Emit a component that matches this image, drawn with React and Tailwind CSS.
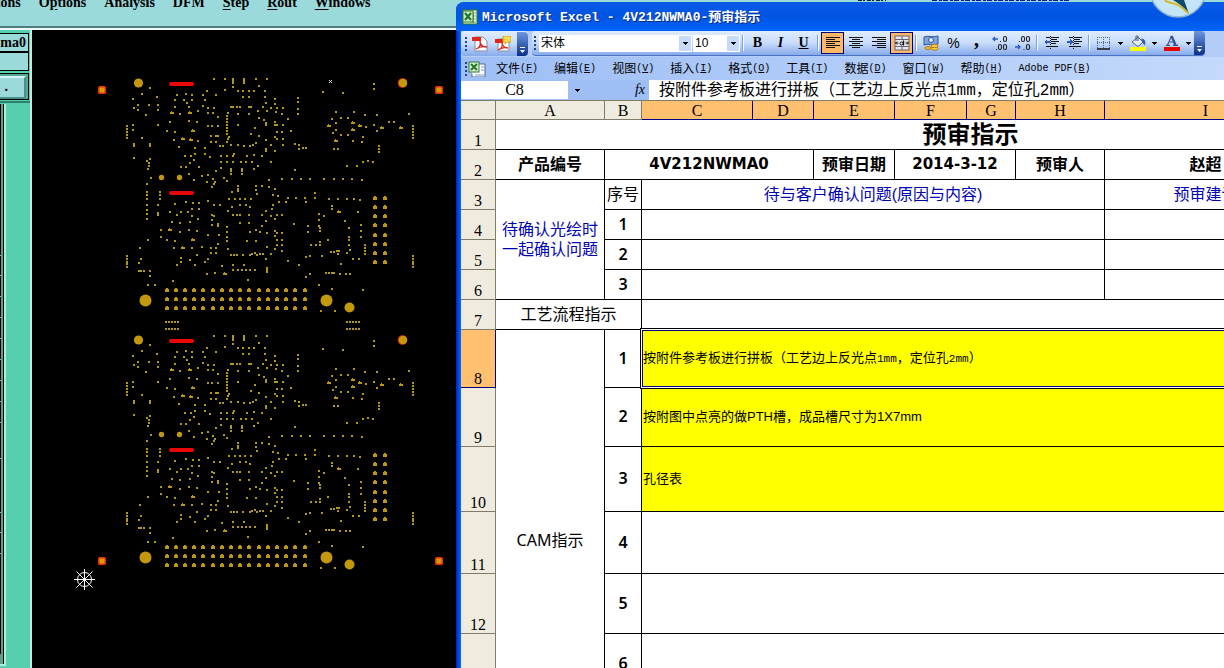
import React from 'react';

const CJK = 'font-["Liberation_Sans","Noto_Sans_CJK_SC",sans-serif]';

/* ---------- board data, px from the board origin ---------- */

const PADS = `94,9 105,9 113,9 113,11 113,13 113,17 124,9 124,11 124,13 136,9 147,9 139,16 30,18 22,24 37,27 13,29
57,25 66,24 72,25 55,30 64,30 72,30 67,33 55,37 69,37 83,25 87,21 96,25 85,30 105,20 118,21 123,21 129,21 134,21
123,27 129,27 145,21 145,27 18,35 29,35 38,35 14,38 18,40 38,40 83,36 88,38 94,38 111,37 113,37 117,37 120,37
129,37 131,37 143,37 146,33 138,41 147,41 26,45 60,44 78,41 88,43 93,43 108,43 118,44 129,44 98,47 107,46 107,49
107,52 107,55 107,58 107,61 107,64 109,67 108,69 107,72 50,52 69,51 77,52 38,55 13,55 13,60 139,48 144,50 146,53
146,55 7,56 7,59 7,62 7,65 7,68 88,56 92,56 98,56 118,55 47,61 55,62 91,66 96,66 98,66 91,72 96,72 22,68 54,70
78,71 135,58 131,64 139,66 146,70 14,74 14,76 30,74 30,76 100,76 103,76 111,75 118,75 124,76 130,76 133,75 136,73
146,79 146,81 59,77 75,78 85,78 14,88 30,89 27,91 29,93 29,96 28,99 31,108 65,86 71,86 75,84 74,90 70,93 61,97
66,97 79,97 85,84 90,87 101,86 107,86 113,86 114,84 127,86 134,85 142,86 101,92 107,92 113,92 121,92 126,92
132,92 101,98 96,101 111,99 111,101 111,104 122,99 122,101 122,104 138,96 134,99 69,104 74,110 82,106 88,105
87,112 93,109 95,112 94,114 92,117 104,108 107,111 149,110 27,114 118,116 118,119 118,121 136,116 136,120
142,116 112,122 149,117 155,29 155,34 151,38 157,38 163,38 156,42 162,44 178,28 178,32 178,39 178,44 168,49
155,52 155,55 157,55 163,55 157,62 162,62 171,61 155,67 157,69 163,69 151,75 163,75 155,81 175,74 179,75 179,79
183,78 186,78 151,92 175,100 254,14 254,19 203,22 223,23 216,42 234,42 245,45 257,45 212,49 221,48 228,48 216,53
246,57 254,55 216,60 213,63 221,65 228,65 257,61 269,52 274,52 289,44 293,56 293,59 293,62 293,65 293,68 243,67
242,72 233,71 214,79 218,79 259,76 259,79 259,82 227,96 237,96 243,92 248,91 253,92 162,109 172,109 181,109
190,109 204,109 214,109 223,109 232,109 242,110 155,119 153,125 158,126 168,128 176,128 185,128 195,123 195,128
209,129 218,129 227,129 234,129 240,130 27,122 27,125 27,129 27,135 27,140 27,144 27,149 40,122 40,125 40,129
38,135 38,143 38,145 41,160 41,167 47,170 55,171 28,170 20,178 55,134 66,132 73,133 79,133 72,139 79,139 50,142
61,142 68,142 57,145 72,146 78,149 52,152 60,153 70,152 60,162 69,160 77,161 88,131 94,135 100,135 92,145 94,146
92,150 92,155 98,154 98,156 88,165 99,165 98,174 107,157 107,162 107,167 107,171 108,179 108,141 118,121 137,124
109,129 115,129 120,129 125,129 131,129 112,137 120,135 126,135 130,137 113,145 117,145 120,145 129,145 142,145
146,141 120,153 129,153 136,160 140,162 130,162 142,156 146,151 147,163 127,171 136,171 147,177 54,178 72,178
82,177 91,178 96,178 91,183 96,183 77,185 61,188 61,192 70,190 88,189 85,192 57,195 75,195 111,185 114,185
117,185 123,185 130,185 132,184 135,183 137,185 140,184 143,184 146,189 102,196 113,195 124,195 113,200 118,200
122,200 126,200 130,200 135,200 147,198 147,200 147,202 7,186 7,189 7,192 7,194 7,197 21,189 19,193 19,201
21,201 24,201 30,201 30,206 28,215 35,215 87,204 95,203 128,210 53,211 159,132 166,132 186,132 153,135 152,139
151,146 157,145 162,145 155,149 212,136 212,139 238,142 199,144 204,146 199,150 225,151 174,154 188,156 188,162
199,156 200,158 200,161 229,158 241,155 241,161 241,167 155,161 157,163 162,163 155,166 157,170 162,170 157,175
162,175 155,179 162,181 151,184 200,172 191,175 196,175 200,175 208,170 229,167 229,170 229,175 230,180 227,183
245,175 245,178 245,181 245,184 211,182 214,182 217,181 219,181 218,184 202,186 190,186 186,187 168,191 179,195
233,189 239,189 221,194 293,186 293,189 293,192 293,194 293,197 206,203 209,203 212,203 214,203 220,204 226,204
230,204 190,204 186,207 199,215 212,219 243,220 201,241 215,241`;

const VIAS = `52,43 70,43 73,61 63,69 71,70 233,53 209,56 240,56 233,60 262,58 281,58 216,71 50,160 73,170 63,178
105,204 219,142`;

const parse = s => s.trim().split(/\s+/).map(p => p.split(',').map(Number));
const cross = (xs, ys) => ys.flatMap(y => xs.map(x => [x, y]));

const pinRows = cross([47, 56, 65, 74, 83, 93, 102, 111, 120, 129, 139, 148, 157, 166, 175, 185], [220, 229, 238]);
const pinCols = cross([255, 265], [128, 137, 146, 155, 165, 174, 183, 192]);
const tabHoles = cross([46, 49, 52, 55, 58, 227, 230, 233, 236, 239], [252, 259]);

const square = pts => pts.map(([x, y]) => `M${x - 1} ${y - 1}h2v2h-2z`).join('');
const via = pts => pts.map(([x, y]) => `M${x - 1} ${y - 1}v-1h1v1h2v2h-4v-2z`).join('');
const pin = pts => pts.map(([x, y]) => `M${x - 2} ${y - 1}h1v-1h2v1h1v3h-4z`).join('');

const padPath = square(parse(PADS));
const viaPath = via(parse(VIAS));
const pinPath = pin([...pinRows, ...pinCols]);

function Board({ y }) {
  return (
    <g transform={`translate(88 ${y})`}>
      <g shapeRendering="crispEdges">
        <path d={padPath} fill="#b0981c" />
        <path d={viaPath} fill="#bd980f" />
        <path d={pinPath} fill="#bd980f" />
      </g>
      <g fill="#c4980c">
        <circle cx="282.5" cy="13" r="4.8" fill="#e02808" />
        <circle cx="18.5" cy="13" r="4.6" />
        <circle cx="283" cy="13" r="4.2" />
        <circle cx="25.5" cy="230.5" r="6" />
        <circle cx="206.5" cy="230.5" r="6" />
        <circle cx="229.5" cy="237.5" r="5" />
        <circle cx="41.5" cy="107.5" r="2.7" />
        <circle cx="59.5" cy="107.5" r="2.7" />
      </g>
      <g fill="#e80808">
        <rect x="49" y="12" width="25" height="4" rx="2" />
        <rect x="49" y="121" width="25" height="4" rx="2" />
      </g>
    </g>
  );
}

function BoardCanvas() {
  const marks = [[70, 60], [407, 60], [70, 531], [407, 531]];
  return (
    <svg width="424" height="638" viewBox="0 0 424 638" className="block" role="img" aria-label="PCB panel">
      <Board y={40} />
      <Board y={297} />
      <path d={square(tabHoles)} transform="translate(88 40)" fill="#b0981c" shapeRendering="crispEdges" />
      {marks.map(([x, y]) => (
        <g key={`${x}-${y}`}>
          <rect x={x - 4} y={y - 4} width="8" height="8" rx="1.5" fill="#e63005" />
          <rect x={x - 2.5} y={y - 2.5} width="5" height="5" rx="1" fill="#d89a08" />
        </g>
      ))}
      <path d="M297 50l3 3m0-3l-3 3" stroke="#ddd" strokeWidth="1" />
      {/* datum */}
      <g stroke="#fff" strokeWidth="1" fill="none">
        <path d="M42 549.5h21M52.5 539v21M44.5 541.5l16 16M60.5 541.5l-16 16" />
        <circle cx="52.5" cy="549.5" r="7" />
      </g>
    </svg>
  );
}

/* ---------- CAM tool ---------- */

const CAM_MENUS = [
  ['', '', 'tions'], ['O', 'p', 'tions'], ['', '', 'Analysis'], ['', '', 'DFM'],
  ['', 'S', 'tep'], ['', 'R', 'out'], ['', 'W', 'indows'],
];

const LIST_ROWS = [152, 20, 21, 21, 21, 21, 21, 21, 21, 36, 54, 20, 21];

function CamApp() {
  return (
    <section className="w-[456px] shrink-0 flex flex-col bg-[#9adadb]">
      <div className="h-[30px] shrink-0 overflow-hidden border-b-2 border-[#eefafa]">
        <nav className='h-7 border-b-2 border-[#4f7c7e] flex gap-[18px] text-sm font-bold text-black font-["Liberation_Serif",serif]'>
          {CAM_MENUS.map(([a, u, b]) => (
            <button key={a + u + b} className={`-mt-[7px] h-5 leading-5 ${a + u + b === 'tions' ? '-ml-[8px]' : ''}`}>
              {a}<span className="underline underline-offset-2">{u}</span>{b}
            </button>
          ))}
        </nav>
      </div>
      <div className="flex flex-1 min-h-0">
        <aside className="w-8 shrink-0 flex flex-col bg-[#55cfb0] border-r-2 border-[#b8efe0]">
          <div className="mt-[3px] mr-[1px] h-[19px] border border-l-0 border-black bg-[#9adadb] flex items-center justify-end pr-[2px] text-sm leading-4 font-bold font-['Liberation_Serif',serif]">ma0</div>
          <div className="mr-[1px] h-[19px] border border-l-0 border-black bg-[#9adadb]" />
          <div className="mt-[2px] mr-[1px] h-[27px] border border-l-0 border-black bg-[#55a898] pr-[2px] pb-[2px]">
            <button className="w-full h-full border-t-2 border-r-2 border-b-2 border-t-[#d8f5f5] border-r-[#4f8f8a] border-b-[#4f8f8a] bg-[#9adadb] text-sm leading-4 font-bold font-['Liberation_Serif',serif] text-right pr-4">.</button>
          </div>
          <div className="mt-[1px] h-[2px] bg-[#2f7d6c]" />
          <div className="flex-1 w-[6px] mt-[1px] mb-[2px] border-r-2 border-b-2 border-[#b0ecd9]">
            <div className="h-full border-r border-black bg-[#5f9f8a] pr-[2px]">
              {LIST_ROWS.map((h, i) => (
                <div key={i} className="w-[1px] bg-black border-b border-[#55cfb0]" style={{ height: h }} />
              ))}
              <div className="w-[1px] h-[100px] bg-black" />
            </div>
          </div>
        </aside>
        <main className="flex-1 bg-black overflow-hidden"><BoardCanvas /></main>
      </div>
    </section>
  );
}

/* ---------- Excel toolbar icons ---------- */

const Svg = ({ w = 16, children, ...p }) => (
  <svg width={w} height="16" viewBox={`0 0 ${w} 16`} fill="none" {...p}>{children}</svg>
);

const Ico = {
  Excel: () => (
    <Svg>
      <rect x="1" y="1" width="14" height="14" fill="#e8f2e4" stroke="#2c7a2c" />
      <path d="M9 4h5M9 7h5M9 10h5M9 13h5M11.5 3v11" stroke="#7fae7a" />
      <rect x="1" y="2" width="10" height="11" fill="#d5ead0" stroke="#2c7a2c" />
      <path d="M3 4l6 7M9 4l-6 7" stroke="#1d7a25" strokeWidth="2.2" />
    </Svg>
  ),
  ExcelDoc: () => (
    <Svg w={18}>
      <path d="M7 3h10v13H4v-3" fill="#fff" stroke="#4a6a9a" />
      <path d="M13 6h3M13 9h3M7 14h9" stroke="#7a94c0" />
      <rect x="1" y="1" width="10" height="10" fill="#dcefd6" stroke="#2c7a2c" />
      <path d="M3 3l6 6M9 3L3 9" stroke="#1d7a25" strokeWidth="2" />
    </Svg>
  ),
  Pdf: () => (
    <Svg>
      <path d="M3 1h8l4 4v10H3z" fill="#fff" stroke="#8a8a9a" />
      <rect x="0" y="1" width="9" height="4" fill="#e3241b" />
      <path d="M4 13c3-1 5-4 4-8 0 4 3 6 7 6-4-1-8 0-11 2z" stroke="#dc2018" strokeWidth="1.3" />
    </Svg>
  ),
  PdfMail: () => (
    <Svg>
      <path d="M3 3h8l3 3v9H3z" fill="#fff" stroke="#8a8a9a" />
      <rect x="0" y="3" width="8" height="4" fill="#e3241b" />
      <path d="M3 14c3-1 5-4 4-8 0 4 3 6 6 6-4-1-7 0-10 2z" stroke="#dc2018" strokeWidth="1.3" />
      <path d="M8 0h8v6h-4l-2 2v-2H8z" fill="#ffd84a" stroke="#c79a12" strokeWidth=".8" />
    </Svg>
  ),
  Left: () => <Svg shapeRendering="crispEdges"><path d="M1 2.5h14M1 4.5h9M1 6.5h14M1 8.5h9M1 10.5h14M1 12.5h9" stroke="#111" /></Svg>,
  Center: () => <Svg shapeRendering="crispEdges"><path d="M1 2.5h14M4 4.5h8M1 6.5h14M4 8.5h8M1 10.5h14M4 12.5h8" stroke="#111" /></Svg>,
  Right: () => <Svg shapeRendering="crispEdges"><path d="M1 2.5h14M6 4.5h9M1 6.5h14M6 8.5h9M1 10.5h14M6 12.5h9" stroke="#111" /></Svg>,
  Merge: () => (
    <Svg>
      <rect x="1" y="1" width="14" height="14" fill="#e6e6ee" stroke="#667" />
      <path d="M1 4.5h14M1 11.5h14M8 1v3M8 12v3" stroke="#667" />
      <path d="M1.500 8h3M14.500 8h-3M3 6.5L1.500 8 3 9.5M13 6.5L14.500 8 13 9.5" stroke="#111" />
      <circle cx="7.500" cy="8.5" r="1.5" stroke="#111" /><path d="M9.5 5.500v5" stroke="#111" strokeWidth="1.3" />
    </Svg>
  ),
  Currency: () => (
    <Svg>
      <path d="M1 2c4-2 9 1 14-1v8c-5 2-10-1-14 1z" fill="#7fa3dd" stroke="#2f55a0" />
      <circle cx="8" cy="5" r="2.5" fill="#dce8fb" stroke="#2f55a0" />
      <ellipse cx="11.5" cy="13.5" rx="3.5" ry="1.7" fill="#ffd24a" stroke="#b07d10" />
      <ellipse cx="11.5" cy="11" rx="3.5" ry="1.7" fill="#ffd24a" stroke="#b07d10" />
      <ellipse cx="5" cy="13" rx="3" ry="1.5" fill="#f2b93a" stroke="#b07d10" />
    </Svg>
  ),
  Outdent: () => (
    <Svg shapeRendering="crispEdges">
      <path d="M2 2.5h4M7 2.5h8M7 4.5h6M7 6.5h8M7 8.5h5M2 11.5h4M7 11.5h7" stroke="#111" strokeWidth="1.5" />
      <path d="M6.500 1v13" stroke="#111" strokeDasharray="1 1" />
      <path d="M0 7l3-3v2h3v2H3v2z" fill="#2a5bc4" />
    </Svg>
  ),
  Indent: () => (
    <Svg shapeRendering="crispEdges">
      <path d="M2 2.5h4M7 2.5h8M7 4.5h6M7 6.5h8M7 8.5h5M2 11.5h4M7 11.5h7" stroke="#111" strokeWidth="1.5" />
      <path d="M6.500 1v13" stroke="#111" strokeDasharray="1 1" />
      <path d="M6 7L3 4v2H0v2h3v2z" fill="#2a5bc4" />
    </Svg>
  ),
  Borders: () => <Svg><path d="M1.5 2v11M7.5 2v11M13.5 2v11M1 2.5h13M1 7.5h13" stroke="#55658c" strokeDasharray="1 1" /><path d="M1 14h13" stroke="#111" strokeWidth="1.3" /></Svg>,
  Fill: () => (
    <Svg>
      <path d="M2 7l6-5 5 5-5 4.500z" fill="#e4ecfa" stroke="#5a6480" /><path d="M6 6V1.500c0-1 2-1 2 0V6" stroke="#3b4f7d" />
      <path d="M11 3.500c4 0 5 3 4 7l-2-2z" fill="#2f5fb8" />
      <rect y="12" width="16" height="4" fill="#ff0" />
    </Svg>
  ),
  FontColor: () => (
    <Svg>
      <path d="M3.5 10L7.500 1" stroke="#41599b" strokeWidth="1.200" /><path d="M7.500 1l4 9" stroke="#31519b" strokeWidth="2.400" />
      <path d="M5.5 7h5M2 10.3h4M9 10.3h5" stroke="#31519b" strokeWidth="1.200" />
      <rect y="12" width="16" height="4" fill="#e00" />
    </Svg>
  ),
  Caret: () => <svg width="5" height="3" viewBox="0 0 5 3" shapeRendering="crispEdges"><path d="M0 0h5v1H4v1H3v1H2V2H1V1H0z" fill="#000" /></svg>,
};

function Decimal({ more }) {
  return (
    <Svg>
      <path d={more ? 'M6 4H1M3 2L1 4l2 2' : 'M0 12h5M3 10l2 2-2 2'} stroke="#2a5bc4" strokeWidth="1.3" />
      <g stroke="#222" strokeWidth="1.1">
        <rect x={more ? 11.5 : 6.5} y="1.5" width="3" height="5" rx="1.5" />
        {!more && <rect x="11.5" y="1.5" width="3" height="5" rx="1.5" />}
        {more && <rect x="6.5" y="9.5" width="3" height="5" rx="1.5" />}
        <rect x="11.5" y="9.5" width="3" height="5" rx="1.5" />
        <path d={more ? 'M8 6.5h1M4 14.5h1' : 'M4 6.5h1M8.5 14.5h1'} />
      </g>
    </Svg>
  );
}

const Grip = () => (
  <svg width="3" height="16" viewBox="0 0 3 16" className="shrink-0" shapeRendering="crispEdges">
    <path d="M0 1h2v2H0zM0 5h2v2H0zM0 9h2v2H0zM0 13h2v2H0z" fill="#27418f" />
  </svg>
);

const Sep = () => <span className="w-[2px] h-4 shrink-0 bg-[#7a9fe0] border-r border-white mx-[2px]" />;

function Tool({ label, active, children }) {
  return (
    <button
      aria-label={label}
      className={`w-[23px] h-[22px] shrink-0 flex items-center justify-center ${active ? 'border border-[#000080] bg-[#ffb868]' : ''}`}>
      {children}
    </button>
  );
}

function DropTool({ label, children }) {
  return (
    <button aria-label={label} className="w-[34px] h-[22px] shrink-0 flex items-center gap-[6px] pl-1">
      {children}<Ico.Caret />
    </button>
  );
}

function More() {
  return (
    <button aria-label="Toolbar options" className="w-[11px] h-6 shrink-0 rounded-r bg-linear-to-b from-[#6f97e0] to-[#0c2f8c] flex flex-col items-center justify-end gap-[2px] pb-[3px]">
      <span className="w-[5px] h-[1px] bg-white" />
      <svg width="5" height="3" viewBox="0 0 5 3"><path d="M0 0h5L2.5 3z" fill="#fff" /></svg>
    </button>
  );
}

function Combo({ label, value, width }) {
  return (
    <label className={`${width} h-[17px] shrink-0 flex items-center bg-white`}>
      <select aria-label={label} className="appearance-none flex-1 min-w-0 h-full pl-[2px] text-xs leading-4 bg-white">
        <option>{value}</option>
      </select>
      <span className="w-3 h-[15px] mr-[1px] bg-[#c6dafa] flex items-center justify-center"><Ico.Caret /></span>
    </label>
  );
}

function Toolbar() {
  const bar = 'h-[25px] flex items-center rounded bg-linear-to-b from-[#e0ecfe] via-[#c8dcfb] to-[#86aaea]';
  return (
    <div className="h-[26px] shrink-0 flex gap-1 bg-[#b4cdf8]">
      <div className={`${bar} pl-1`}>
        <Grip />
        <Tool label="Convert to PDF"><Ico.Pdf /></Tool>
        <Tool label="Convert and email"><Ico.PdfMail /></Tool>
        <span className="w-[3px]" />
        <More />
      </div>
      <div className={`${bar} pl-[2px] border-b border-[#4a72c4]`}>
        <Grip />
        <span className="w-[2px]" />
        <Combo label="Font" value="宋体" width="w-[153px]" />
        <span className="w-[1px]" />
        <Combo label="Font size" value="10" width="w-[47px]" />
        <Sep />
        <Tool label="Bold"><span className='font-bold text-sm font-["Liberation_Serif",serif]'>B</span></Tool>
        <Tool label="Italic"><span className='font-bold italic text-sm font-["Liberation_Serif",serif]'>I</span></Tool>
        <Tool label="Underline"><span className='font-bold underline text-sm font-["Liberation_Serif",serif]'>U</span></Tool>
        <Sep />
        <Tool label="Align left" active><Ico.Left /></Tool>
        <Tool label="Center"><Ico.Center /></Tool>
        <Tool label="Align right"><Ico.Right /></Tool>
        <Tool label="Merge and center" active><Ico.Merge /></Tool>
        <Sep />
        <Tool label="Currency"><Ico.Currency /></Tool>
        <Tool label="Percent"><span className="text-sm">%</span></Tool>
        <Tool label="Comma"><span className='text-xl leading-3 pb-2 font-bold font-["Liberation_Serif",serif]'>,</span></Tool>
        <Tool label="Increase decimal"><Decimal more /></Tool>
        <Tool label="Decrease decimal"><Decimal /></Tool>
        <Sep />
        <Tool label="Decrease indent"><Ico.Outdent /></Tool>
        <Tool label="Increase indent"><Ico.Indent /></Tool>
        <Sep />
        <DropTool label="Borders"><Ico.Borders /></DropTool>
        <DropTool label="Fill color"><Ico.Fill /></DropTool>
        <DropTool label="Font color"><Ico.FontColor /></DropTool>
        <More />
      </div>
    </div>
  );
}

const XL_MENUS = [
  ['文件', 'F'], ['编辑', 'E'], ['视图', 'V'], ['插入', 'I'], ['格式', 'O'], ['工具', 'T'],
  ['数据', 'D'], ['窗口', 'W'], ['帮助', 'H'], ['Adobe PDF', 'B'],
];

function MenuBar() {
  return (
    <nav className="h-[23px] shrink-0 flex items-center pl-1 bg-linear-to-r from-[#9ebef5] to-[#c4d9fb]">
      <Grip />
      <button aria-label="Workbook" className="mr-[10px]"><Ico.ExcelDoc /></button>
      <div className="flex gap-4 whitespace-nowrap">
        {XL_MENUS.map(([name, key]) => (
          <button key={key} className="flex items-center text-xs leading-4">
            <span className={key === 'B' ? 'text-[10px] font-["Liberation_Mono",monospace] whitespace-pre' : ''}>{name}</span>
            <span className='text-[10px] font-["Liberation_Mono",monospace]'>(<u>{key}</u>)</span>
          </button>
        ))}
      </div>
    </nav>
  );
}

function FormulaBar() {
  return (
    <div className="h-5 shrink-0 flex bg-[#9ebef5]">
      <input aria-label="Name box" defaultValue="C8" className='w-[107px] h-[18px] mt-[1px] bg-white text-center text-base leading-4 font-["Liberation_Serif",serif]' />
      <button aria-label="Names" className="w-[19px] flex items-center justify-center"><Ico.Caret /></button>
      <button className='w-[62px] text-right pr-1 text-sm leading-4 italic font-["Liberation_Serif",serif]'>fx</button>
      <input
        aria-label="Formula"
        defaultValue="按附件参考板进行拼板（工艺边上反光点1mm，定位孔2mm）"
        className='flex-1 min-w-0 h-5 pl-[10px] pt-[1px] bg-white text-base leading-5 font-["Liberation_Mono","Noto_Sans_CJK_SC",monospace]' />
    </div>
  );
}

/* ---------- sheet ---------- */

const COLS = [['A', 109], ['B', 37], ['C', 111], ['D', 61], ['E', 81], ['F', 72], ['G', 49], ['H', 89], ['I', 202], ['J', 139]];

function RowHead({ n, active }) {
  return (
    <th className={`border-r border-b align-bottom text-base leading-4 font-normal font-["Liberation_Serif",serif] ${active ? 'bg-[#ffc06f] border-[#000080]' : 'bg-[#efebde] border-[#807c6c]'}`}>
      {n}
    </th>
  );
}

function Cell({ className = '', ...p }) {
  return <td className={`border-r border-b border-black text-center align-middle leading-5 ${className}`} {...p} />;
}

function Num({ children }) {
  return <Cell className='pb-[2px] font-semibold font-["Noto_Sans",sans-serif]'>{children}</Cell>;
}

function Sheet() {
  return (
    <div className="flex-1 min-h-0 overflow-hidden bg-white border-t border-[#807c6c]">
      <table className="table-fixed border-separate border-spacing-0 w-[985px] text-base text-black">
        <colgroup>
          <col className="w-[35px]" />
          {COLS.map(([c, w]) => <col key={c} style={{ width: w }} />)}
        </colgroup>
        <thead>
          <tr className="h-[19px]">
            <th aria-label="Select all" className="border-r border-b border-[#807c6c] bg-[#efebde]" />
            {COLS.map(([c]) => (
              <th key={c} className={`border-r border-b text-base leading-4 pt-[2px] font-normal font-["Liberation_Serif",serif] ${c < 'C' ? 'bg-[#efebde] border-[#807c6c]' : 'bg-[#ffc06f] border-[#000080]'}`}>{c}</th>
            ))}
          </tr>
        </thead>
        <tbody>
          <tr className="h-[30px]">
            <RowHead n={1} />
            <Cell colSpan={10} className="pt-[1px] text-2xl leading-7 font-bold">预审指示</Cell>
          </tr>
          <tr className="h-[30px] font-bold">
            <RowHead n={2} />
            <Cell>产品编号</Cell>
            <Cell colSpan={3} className='pb-[2px] text-[15px] font-["DejaVu_Sans",sans-serif]'>4V212NWMA0</Cell>
            <Cell>预审日期</Cell>
            <Cell colSpan={2} className='pb-[2px] text-[15px] font-["DejaVu_Sans",sans-serif]'>2014-3-12</Cell>
            <Cell>预审人</Cell>
            <Cell>赵超</Cell>
            <Cell />
          </tr>
          <tr className="h-[30px]">
            <RowHead n={3} />
            <Cell rowSpan={4} className="text-[#0000b4]">待确认光绘时<br />一起确认问题</Cell>
            <Cell>序号</Cell>
            <Cell colSpan={6} className="text-[#0000b4]">待与客户确认问题(原因与内容)</Cell>
            <Cell className="text-[#0000b4]">预审建议</Cell>
            <Cell />
          </tr>
          {[1, 2, 3].map(n => (
            <tr key={n} className="h-[30px]">
              <RowHead n={n + 3} />
              <Num>{n}</Num>
              <Cell colSpan={6} />
              <Cell />
              <Cell />
            </tr>
          ))}
          <tr className="h-[30px]">
            <RowHead n={7} />
            <Cell colSpan={2}>工艺流程指示</Cell>
            <Cell colSpan={8} />
          </tr>
          <tr className="h-[58px]">
            <RowHead n={8} active />
            <Cell rowSpan={7}><span className='font-["Noto_Sans",sans-serif]'>CAM</span>指示</Cell>
            <Num>1</Num>
            <Cell colSpan={8} className="relative bg-[#ff0] text-[13px] text-left pl-[1px]">
              按附件参考板进行拼板（工艺边上反光点<Mono>1mm</Mono>，定位孔<Mono>2mm</Mono>）
              {/* selection frame */}
              <span className="absolute -inset-[2px] border border-black pointer-events-none">
                <span className="block h-full border border-white">
                  <span className="block h-full border border-[#000080]" />
                </span>
              </span>
            </Cell>
          </tr>
          <tr className="h-[59px]">
            <RowHead n={9} />
            <Num>2</Num>
            <Cell colSpan={8} className="bg-[#ff0] text-[13px] text-left pl-[1px]">按附图中点亮的做PTH槽，成品槽尺寸为1X7mm</Cell>
          </tr>
          <tr className="h-[65px]">
            <RowHead n={10} />
            <Num>3</Num>
            <Cell colSpan={8} className="bg-[#ff0] text-[13px] text-left pl-[1px]">孔径表</Cell>
          </tr>
          <tr className="h-[62px]"><RowHead n={11} /><Num>4</Num><Cell colSpan={8} /></tr>
          <tr className="h-[60px]"><RowHead n={12} /><Num>5</Num><Cell colSpan={8} /></tr>
          <tr className="h-[60px]"><RowHead n={13} /><Num>6</Num><Cell colSpan={8} /></tr>
          <tr className="h-[58px]"><RowHead n={14} /><Num>7</Num><Cell colSpan={8} /></tr>
        </tbody>
      </table>
    </div>
  );
}

const Mono = ({ children }) => <span className='text-[11px] font-["Liberation_Mono",monospace]'>{children}</span>;

function ExcelWindow() {
  return (
    <section className="relative flex-1 min-w-0 flex flex-col bg-[#9adadb] pt-[2px]">
      <div className="flex-1 min-h-0 flex flex-col rounded-tl-lg overflow-hidden bg-linear-to-r from-[#0019cf] to-[#166aee] to-[5px] pl-[5px]">
        <header className="h-[29px] -ml-[5px] pl-[6px] pt-[1px] shrink-0 flex items-center gap-1 bg-linear-to-b from-[#0a5ae6] via-[#0054e3] to-[#0064fb] text-white font-bold">
          <Ico.Excel />
          <h1 className='text-[13px] leading-5 whitespace-nowrap font-["Liberation_Mono",monospace] [text-shadow:1px_1px_#0a2a80]'>
            Microsoft Excel - 4V212NWMA0-<span className={CJK}>预审指示</span>
          </h1>
        </header>
        <Toolbar />
        <MenuBar />
        <FormulaBar />
        <Sheet />
      </div>
      {/* strip of the window behind, above the title bar */}
      <svg width="220" height="2" viewBox="0 0 220 2" className="absolute top-0 left-[400px]" aria-hidden="true">
        <path d="M2 .5h28" stroke="#123" strokeDasharray="4 1 2 2" />
        <path d="M76 .5h138" stroke="#1414a0" strokeDasharray="5 2 3 1" />
      </svg>
      {/* desktop badge over the title bar */}
      <svg width="56" height="20" viewBox="0 0 56 20" className="absolute top-0 right-[18px]" aria-hidden="true">
        <circle cx="28" cy="-11" r="28" fill="#c4e4f8" stroke="#8fb4d4" strokeWidth="1.5" />
        <path d="M23 0h11l5 14c-3-5-8-9-16-14z" fill="#0f4a66" />
        <path d="M15 0c3 4 8 2 13 5s7 5 10 8" stroke="#d8b820" strokeWidth="2" fill="none" />
      </svg>
    </section>
  );
}

export default function App() {
  return (
    <div className={`h-screen flex overflow-hidden text-black font-["Liberation_Sans","Noto_Sans_CJK_SC",sans-serif]`}>
      <CamApp />
      <ExcelWindow />
    </div>
  );
}
